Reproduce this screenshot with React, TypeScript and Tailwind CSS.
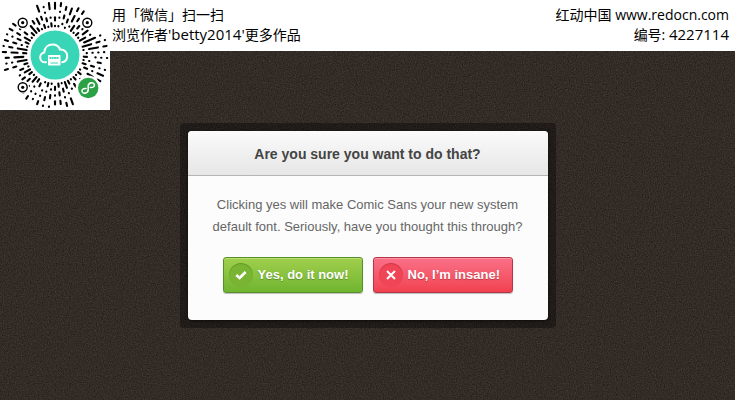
import type { ReactNode } from 'react';

// One string per ray, clockwise from the top, read outwards from the disc.
const RAYS = [
    '101100111', '100101011', '010110110', '101101110', '010111011', '111011011',
    '101101100', '110101000', '101110000', '111010000', '011111010', '111101101',
    '101111011', '010101010', '110010101', '101001100', '110110101', '011010111',
    '100111011', '110110111', '101001000', '110100000', '101100000', '110100000',
    '111010111', '101101011', '110110110', '011010110', '101011001', '110101101',
    '100101011', '011001010', '110101011', '111010110', '101100000', '110110000',
    '111010000', '101100000', '110011011', '111101010', '011110110', '110111011',
    '111101101', '101011011', '110110101', '111011011', '101101011', '110010100',
    '111100000', '110110000', '101110000', '110110111', '101101010', '110100111',
];

const FINDERS = [
    [22.7, 22.7],
    [87.3, 22.7],
    [22.7, 87.3],
];

function runsOf(ray: string) {
    return [...ray.matchAll(/1+/g)].map((m) => {
        const from = 28.8 + m.index * 2.9;
        return { from, to: from + (m[0].length - 1) * 2.9 + 0.3 };
    });
}

function MiniProgramCode() {
    return (
        <svg viewBox="0 0 110 110" className="h-[110px] w-[110px] shrink-0 bg-white" role="img" aria-label="微信">
            <g stroke="#000" strokeWidth="2.1" strokeLinecap="round">
                {RAYS.map((ray, i) => (
                    <g key={i} transform={`rotate(${(i * 360) / RAYS.length} 55 55)`}>
                        {runsOf(ray).map(({ from, to }) => (
                            <line key={from} x1="55" x2="55" y1={55 - from} y2={55 - to} />
                        ))}
                    </g>
                ))}
            </g>
            {FINDERS.map(([x, y]) => (
                <g key={`${x}-${y}`}>
                    <circle cx={x} cy={y} r="6.4" fill="#fff" />
                    <circle cx={x} cy={y} r="4.5" fill="none" stroke="#000" strokeWidth="1.4" />
                    <circle cx={x} cy={y} r="1.6" fill="#000" />
                </g>
            ))}
            <circle cx="55" cy="55" r="24.5" fill="#38d6b7" />
            {/* cloud */}
            <path
                d="M46 62.3h-1a5 5 0 0 1-.8-9.9c.3-4.8 3.7-8 8.3-8 3.7 0 6.5 2 7.6 5.2 4.2-.2 7.1 2.6 7.1 6.4 0 3.3-2 5.7-5 6.3"
                fill="none"
                stroke="#fff"
                strokeWidth="2"
                strokeLinecap="round"
            />
            <rect x="48" y="55" width="12.5" height="10.5" rx="0.8" fill="#fff" />
            <path d="M49.5 58h9.5" stroke="#38d6b7" strokeWidth="2" strokeDasharray="1.8 .5" />
            <path d="M50.5 63h7.5" stroke="#38d6b7" strokeWidth="1" />
            {/* mini program badge */}
            <circle cx="88.2" cy="88" r="12.5" fill="#fff" />
            <circle cx="88.2" cy="88" r="10.2" fill="#2aa145" />
            <path
                d="M86 88.5c-2.6-.3-4.2 1-4 2.7.5 3.3 6.2 2.3 6.2-1.4v-3.6c0-3.7 5.7-4.7 6.2-1.4.2 1.7-1.4 3-4 2.7"
                fill="none"
                stroke="#fff"
                strokeWidth="1.6"
                strokeLinecap="round"
            />
        </svg>
    );
}

function Grain() {
    return (
        <svg className="absolute inset-0 h-full w-full" aria-hidden="true">
            <filter id="grain" x="0" y="0" width="100%" height="100%" colorInterpolationFilters="sRGB">
                <feTurbulence type="fractalNoise" baseFrequency="0.85" numOctaves="2" seed="4" />
                <feColorMatrix values="0.17 0 0 0 0.112  0.17 0 0 0 0.084  0.17 0 0 0 0.065  0 0 0 0 1" />
            </filter>
            <rect width="100%" height="100%" filter="url(#grain)" />
        </svg>
    );
}

interface DialogButtonProps {
    children: ReactNode;
    icon: ReactNode;
    className: string;
    badgeClassName: string;
}

function DialogButton({ children, icon, className, badgeClassName }: DialogButtonProps) {
    return (
        <button
            type="button"
            className={`flex h-9 w-[140px] items-center gap-[5px] rounded-[3px] border pl-[5px] text-[13px] font-bold whitespace-nowrap text-white ${className}`}
        >
            <span className={`flex size-6 shrink-0 items-center justify-center rounded-full ${badgeClassName}`}>{icon}</span>
            {children}
        </button>
    );
}

export default function App() {
    return (
        <div className="relative flex min-h-screen flex-col bg-[#332b27]">
            <Grain />

            <header className="relative flex h-[51px] items-start gap-0.5 bg-white font-['Open_Sans','Noto_Sans_CJK_SC',sans-serif] text-sm leading-5 text-black">
                <MiniProgramCode />
                <div className="pt-[5px]">
                    <p>用「微信」扫一扫</p>
                    <p>
                        浏览作者<span className="text-[15px] leading-none">'betty2014'</span>更多作品
                    </p>
                </div>
                <div className="ml-auto pt-[5px] pr-1.5 text-right">
                    <p>红动中国 www.redocn.com</p>
                    <p>
                        编号: <span className="text-[15px] leading-none">4227114</span>
                    </p>
                </div>
            </header>

            <main className="relative flex flex-1 justify-center pt-[72px] font-['Liberation_Sans',Arial,sans-serif]">
                <div className="self-start rounded-[4px] bg-black/35 p-2">
                    <section
                        role="dialog"
                        aria-labelledby="dialog-title"
                        className="w-[360px] overflow-hidden rounded-[4px] bg-[#fcfcfc] shadow-[0_1px_3px_rgba(0,0,0,0.6)]"
                    >
                        <h1
                            id="dialog-title"
                            className="border-b border-[#b5b5b5] bg-linear-to-b from-[#fbfbfb] to-[#e6e6e6] pt-[13px] pb-[11px] text-center text-sm leading-5 font-bold text-[#444]"
                        >
                            Are you sure you want to do that?
                        </h1>
                        <div className="px-4 pt-[18px] pb-[27px]">
                            <p className="text-center text-[13px] leading-[22px] text-[#666]">
                                Clicking yes will make Comic Sans your new system
                                <br />
                                default font. Seriously, have you thought this through?
                            </p>
                            <div className="mt-[19px] flex justify-center gap-2.5">
                                <DialogButton
                                    className="border-[#578f2c] bg-linear-to-b from-[#a0cf4d] to-[#70b52f] shadow-[inset_0_1px_0_#b9df70,0_1px_1px_rgba(0,0,0,0.25)] text-shadow-[0_1px_1px_rgba(60,110,20,0.6)]"
                                    badgeClassName="bg-[#79b433] shadow-[inset_0_1px_1px_rgba(60,110,20,0.35)]"
                                    icon={
                                        <svg viewBox="0 0 12 12" className="size-3" fill="none" stroke="currentColor" strokeWidth="2.6">
                                            <path d="M1.3 6 4.6 9 10.6 3" />
                                        </svg>
                                    }
                                >
                                    Yes, do it now!
                                </DialogButton>
                                <DialogButton
                                    className="border-[#b23848] bg-linear-to-b from-[#fa7088] to-[#f1404f] shadow-[inset_0_1px_0_#ff91a4,0_1px_1px_rgba(0,0,0,0.25)] text-shadow-[0_1px_1px_rgba(150,30,45,0.6)]"
                                    badgeClassName="bg-[#ef4557] shadow-[inset_0_1px_1px_rgba(150,30,45,0.3)]"
                                    icon={
                                        <svg viewBox="0 0 12 12" className="size-3" fill="none" stroke="currentColor" strokeWidth="2">
                                            <path d="M2 2l8 8M10 2l-8 8" />
                                        </svg>
                                    }
                                >
                                    No, I’m insane!
                                </DialogButton>
                            </div>
                        </div>
                    </section>
                </div>
            </main>
        </div>
    );
}
